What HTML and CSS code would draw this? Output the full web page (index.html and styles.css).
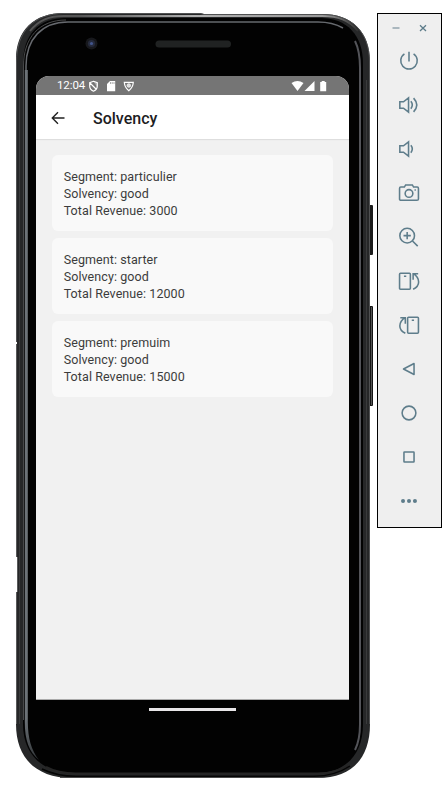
FILE: index.html
```html
<!DOCTYPE html>
<html lang="en">
<head>
<meta charset="utf-8">
<title>Solvency</title>
<link rel="stylesheet" href="styles.css">
</head>
<body>
<main class="desktop">
  <section class="phone">
    <svg class="frame" width="358" height="766" viewBox="16 13 358 766">
      <defs>
        <linearGradient id="rim" x1="0" x2="1"><stop offset="0" stop-color="#555"/><stop offset=".15" stop-color="#555"/><stop offset=".5" stop-color="#b0b0b0"/><stop offset=".9" stop-color="#999"/><stop offset="1" stop-color="#333"/></linearGradient>
        <linearGradient id="edge" x1="0" x2="0" y1="0" y2="1"><stop offset="0" stop-color="#6c7277"/><stop offset=".94" stop-color="#6c7277"/><stop offset="1" stop-color="#33373a"/></linearGradient>
      </defs>
      <rect x="368" y="205" width="5" height="50" rx="1" fill="#1c1c1c"/>
      <rect x="368" y="306" width="5" height="100" rx="1" fill="#141414"/>
      <path d="M371.500 307V405" stroke="#555" fill="none"/>
      <path d="M16 60C16 30 34 13 64 13H200L204 14H322C352 14 370 32 370 62V724C370 760 350 778 318 778H72C36 778 16 758 16 724V592H17V557H16V344H17V342H16Z" fill="#262728"/>
      <path d="M16.500 342V62C16.500 31 34 13.500 64 13.500H200L204 14.500H322C352 14.500 369.500 32 369.500 62V724" fill="none" stroke="#505152"/>
      <path d="M16.500 344V557M17.500 557V592M16.500 592V724" stroke="#58595a" fill="none"/>
      <path d="M19.500 80V724M366.500 80V724" stroke="#3a3b3c" fill="none"/>
      <path d="M30 31C39 20 49 16 64 16H322C338 16 349 20 358 31" fill="none" stroke="url(#rim)" stroke-width="1.800"/>
      <path d="M23 724V64C23 35 38 18 66 18H320C347 18 363 35 363 64V724C363 755 345 773 316 773H74C43 773 23 755 23 724Z" fill="#020202"/>
      <path d="M23.500 720V66C23.500 38 39 20 66 20" fill="none" stroke="#48494a"/>
      <path d="M26 70V66C26 39 42 22 68 22H318C329 22 336 24 343 28" fill="none" stroke="#66696e" stroke-width="1.500"/>
      <path d="M24.800 70H27.800V722C28 738 31 750 39 760C29 752 24.800 740 24.800 722Z" fill="url(#edge)"/>
      <path d="M355 41C359 49 360 56 360 68V724C360 737 358 744 355 750" fill="none" stroke="#535459" stroke-width="2"/>
      <path d="M46 767Q58 773.500 76 773.500H318Q336 773.500 348 765" fill="none" stroke="#252525" stroke-width="2"/>
      <path d="M42 769Q57 776.300 76 776.300H314Q335 776 350 766" fill="none" stroke="#050505" stroke-width="1.500"/>
      <path d="M60 777.500H322" stroke="#4a4a4a"/>
      <circle cx="91.500" cy="43.500" r="6" fill="#17181c"/><circle cx="91.500" cy="43.500" r="3.600" fill="#252a3c"/><circle cx="91.500" cy="43.500" r="1.600" fill="#42558c"/>
      <rect x="155.500" y="40.500" width="75.500" height="7" rx="3.500" fill="#202222"/>
    </svg>
    <div class="screen">
      <div class="status">
        <span class="clock">12:04</span>
        <svg width="46" height="12" viewBox="88 79 46 12" fill="none" stroke="#fff" stroke-width="1.200">
          <path d="M93.500 80.300 97.300 81.600V85Q97.300 88.500 93.500 90.200Q89.700 88.500 89.700 85V81.600ZM90 82 96.500 88.500"/><path d="M93.500 80.500 97 82V86Z" fill="#fff" fill-opacity=".35" stroke="none"/>
          <path d="M110 80H115.200V90.300H107V83Z" fill="#fff" stroke="none"/><path d="M110.500 81V83M112.200 81V83M114 81V83" stroke="#777" stroke-width=".6"/>
          <path d="M124.300 81.300H133.300Q133 86.500 128.800 89.700Q124.600 86.500 124.300 81.300Z"/><circle cx="128.800" cy="84.500" r="1.800" fill="#ddd" stroke-width=".7"/>
        </svg>
        <svg class="signals" width="36" height="12" viewBox="291 79 36 12" fill="#fff">
          <path d="M291.500 82Q297.500 78 303.500 82L297.500 90Z"/><path d="M304.500 90H314.500V80Z"/><path d="M321.700 80H324.700V81H326.200V90.300H320.200V81H321.700Z"/>
        </svg>
      </div>
      <header class="appbar">
        <svg width="14" height="14" viewBox="0 0 14 14" fill="none" stroke="#202020" stroke-width="1.400"><path d="M13.500 7H1.500M7 1.300 1.300 7 7 12.700"/></svg>
        <h1>Solvency</h1>
      </header>
      <div class="content">
        <article class="card"><p>Segment: particulier</p><p>Solvency: good</p><p>Total Revenue: 3000</p></article>
        <article class="card"><p>Segment: starter</p><p>Solvency: good</p><p>Total Revenue: 12000</p></article>
        <article class="card"><p>Segment: premuim</p><p>Solvency: good</p><p>Total Revenue: 15000</p></article>
      </div>
    </div>
    <div class="homebar"></div>
  </section>
  <aside class="tools">
    <div class="window"><svg width="36" height="10" viewBox="391 23 36 10"><path d="M392.500 28H399.500" stroke="#93a5ae" stroke-width="1.500"/><path d="M420 25.200 426 31M426 25.200 420 31" stroke="#5e7d8b" stroke-width="1.300"/></svg></div>
    <svg class="tool" viewBox="0 0 24 24"><path d="M12 2V12.500M7 4.200A9 9 0 1 0 17 4.200"/></svg>
    <svg class="tool" viewBox="0 0 24 24"><path d="M2 8.500H6L11.500 4.200V19.800L6 15.500H2ZM14 8Q17.200 12 14 16M17 4.500Q24 12 17 19.500"/></svg>
    <svg class="tool" viewBox="0 0 24 24"><path d="M2 8.500H6L11.500 4.200V19.800L6 15.500H2ZM14 8Q17.200 12 14 16"/></svg>
    <svg class="tool" viewBox="0 0 24 24"><path d="M3 5.500H7L8.300 3.200H15.700L17 5.500H21Q22.300 5.500 22.300 7V18.500Q22.300 20 20.700 20H3.300Q1.700 20 1.700 18.500V7Q1.700 5.500 3 5.500Z"/><circle cx="12" cy="12.500" r="4.200"/><path d="M18 8.800H19.500"/></svg>
    <svg class="tool" viewBox="0 0 24 24"><circle cx="10" cy="10.500" r="8"/><path d="M10 6.500V14.500M6 10.500H14M15.800 16.300 21.500 22"/></svg>
    <svg class="tool" viewBox="0 0 24 24"><rect x="1.700" y="3.500" width="11.800" height="17.500" rx="1"/><path d="M6.500 6.800H9M22 4H16.500V10.500M16.500 4Q22.500 7.500 22.500 13Q22.500 18 16.500 21"/></svg>
    <svg class="tool" viewBox="0 0 24 24"><rect x="10.500" y="3.500" width="11.800" height="17.500" rx="1"/><path d="M15 6.800H17.500M2.500 4H8V10.500M8 4Q2 7.500 2 13Q2 18 8 21"/></svg>
    <svg class="tool" viewBox="0 0 24 24"><path d="M17.500 6V18L6 12Z" stroke-linejoin="round"/></svg>
    <svg class="tool" viewBox="0 0 24 24"><circle cx="12" cy="12" r="7.500"/></svg>
    <svg class="tool" viewBox="0 0 24 24"><rect x="6.500" y="6.500" width="11" height="11" rx=".5"/></svg>
    <svg class="tool dots" viewBox="0 0 24 24"><circle cx="5.500" cy="12" r="2.200"/><circle cx="12" cy="12" r="2.200"/><circle cx="18.500" cy="12" r="2.200"/></svg>
  </aside>
</main>
</body>
</html>
```
FILE: styles.css
```css
* { box-sizing: border-box; }
body { margin: 0; background: #fff; font-family: Roboto, sans-serif; overflow: hidden; }
h1, p { margin: 0; }
svg { display: block; }
.desktop { display: flex; align-items: flex-start; gap: 7px; width: 445px; height: 786px; padding: 13px 0 0 16px; }
.phone { position: relative; width: 354px; height: 766px; padding: 63px 21px 0 20px; }
.frame { position: absolute; top: 0; left: 0; }
.screen { position: relative; width: 313px; height: 624px; border-radius: 13px 13px 0 0; overflow: hidden; background: #f1f1f1; border-bottom: 1px solid #aaa; }
.status { display: flex; align-items: center; height: 19px; padding: 0 22px 0 21px; background: #757575; color: #fff; }
.clock { width: 31px; font-size: 11.5px; line-height: 19px; letter-spacing: -.1px; white-space: nowrap; }
.signals { margin-left: auto; }
.appbar { display: flex; align-items: center; gap: 28px; height: 44px; padding: 1px 15px 0; background: #fff; box-shadow: 0 1px 1px #dedede; color: #1d1d1f; }
.appbar h1 { font-size: 16px; line-height: 20px; font-weight: 500; letter-spacing: 0; padding-top: 2px; }
.content { display: flex; flex-direction: column; gap: 7.500px; padding: 16px 16px 0; }
.card { height: 75.600px; padding: 13px 11.700px; border-radius: 6px; background: #f9f9f9; color: #3c3c3c; font-size: 12.500px; letter-spacing: .08px; line-height: 17px; }
.homebar { position: relative; width: 87px; height: 3px; margin: 8px 0 0 113px; background: #e8e6e8; }
.tools { display: flex; flex-direction: column; align-items: center; width: 65px; height: 515px; padding-right: 2px; border: 1px solid #000; background: #efefef; }
.window { display: flex; justify-content: center; height: 25px; padding-top: 9px; }
.tool { flex: none; width: 22px; height: 22px; margin: 11px 0; fill: none; stroke: #5e7d8b; stroke-width: 1.700; overflow: visible; }
.dots { fill: #5e7d8b; stroke: none; }
```
